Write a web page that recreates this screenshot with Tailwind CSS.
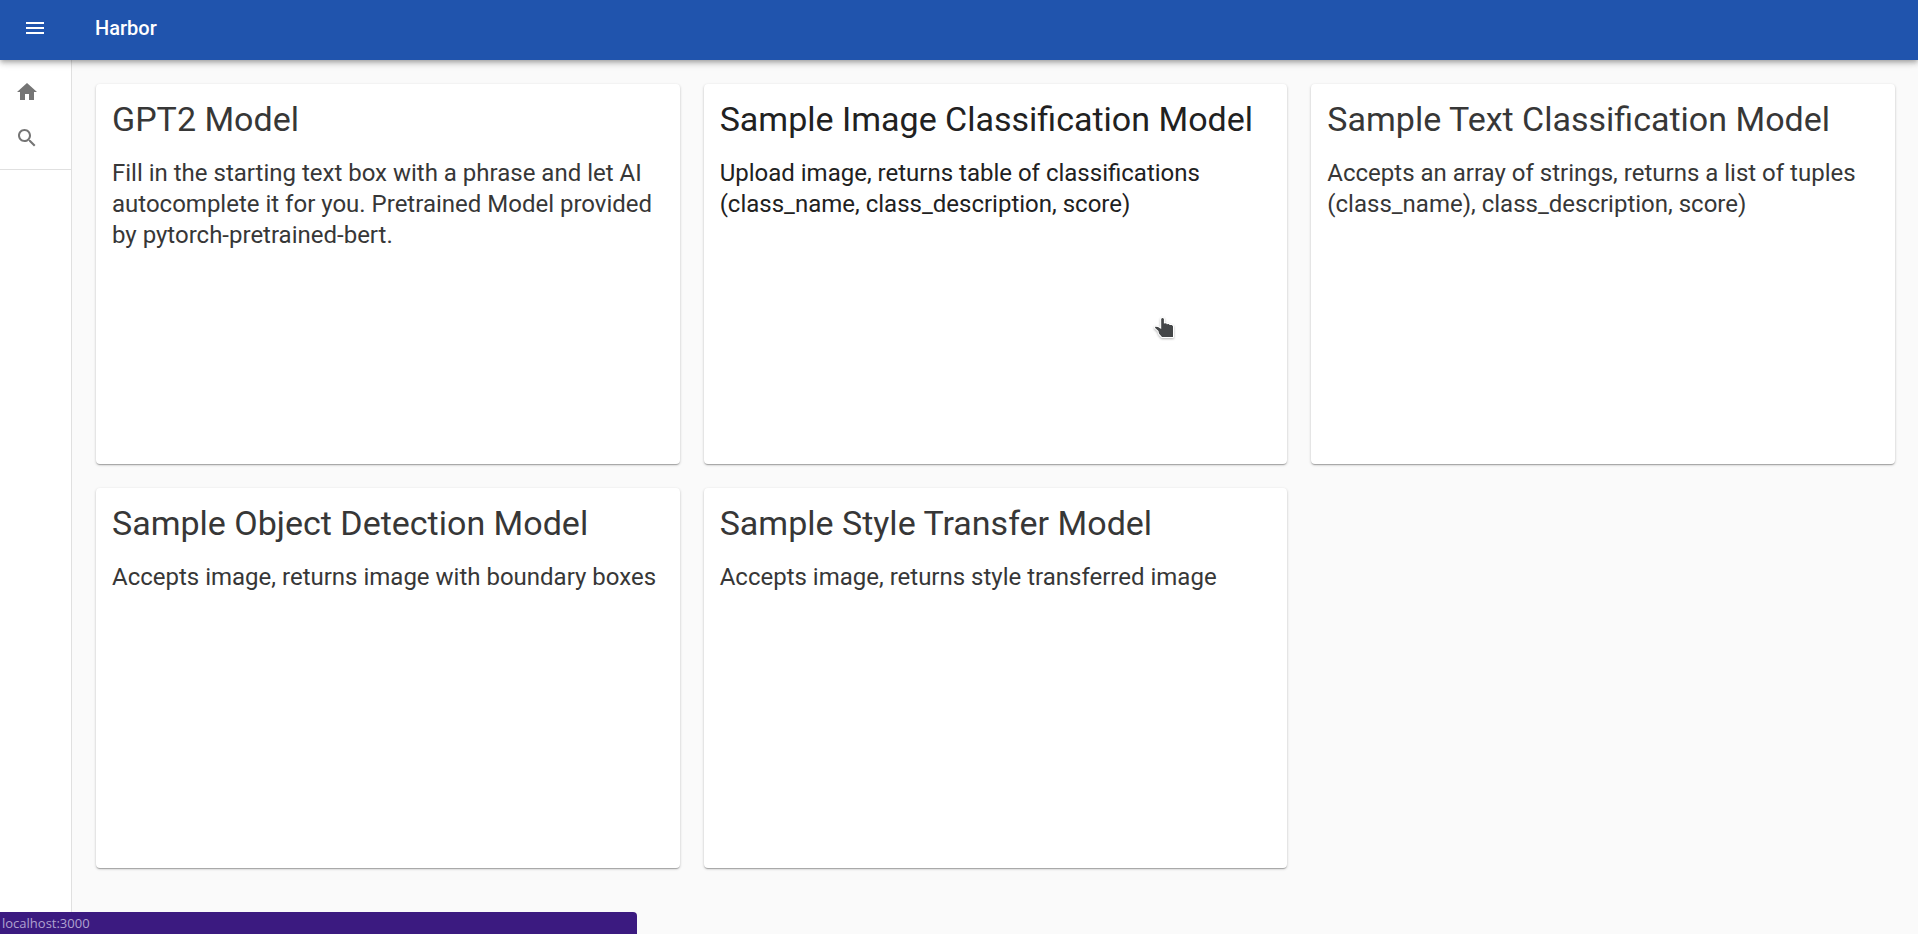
<!DOCTYPE html>
<html lang="en">
<head>
<meta charset="utf-8">
<meta name="viewport" content="width=device-width, initial-scale=1">
<title>Harbor</title>
<script src="https://cdn.jsdelivr.net/npm/@tailwindcss/browser@4"></script>
</head>
<body class="flex min-h-screen flex-col bg-[#fafafa] font-[Roboto,sans-serif] text-[#373737]">
  <header class="relative z-10 flex h-[60px] items-center bg-[#2054ad] pb-1 text-white shadow-[0_2px_4px_-1px_rgba(0,0,0,0.2),0_4px_5px_0_rgba(0,0,0,0.14),0_1px_10px_0_rgba(0,0,0,0.12)]">
    <button type="button" aria-label="Open menu" class="ml-[23px] mr-12 size-6">
      <svg class="size-6" viewBox="0 0 24 24" fill="currentColor"><path d="M3 18h18v-2H3v2zm0-5h18v-2H3v2zm0-7v2h18V6H3z"/></svg>
    </button>
    <h1 class="text-xl font-medium">Harbor</h1>
  </header>

  <div class="flex flex-1">
    <aside class="w-[72px] shrink-0 border-r border-[#e0e0e0] bg-white pt-px text-[#757575]">
      <nav class="flex flex-col border-b border-[#e0e0e0] py-2">
        <a href="#home" aria-label="Home" class="py-[11px] pl-[15px]">
          <svg class="size-6" viewBox="0 0 24 24" fill="currentColor"><path d="M10 20v-6h4v6h5v-8h3L12 3 2 12h3v8z"/></svg>
        </a>
        <a href="#search" aria-label="Search" class="py-[11px] pl-[15px]">
          <svg class="size-6" viewBox="0 0 24 24" fill="currentColor"><path d="M15.5 14h-.79l-.28-.27C15.41 12.59 16 11.11 16 9.5 16 5.91 13.09 3 9.5 3S3 5.91 3 9.5 5.91 16 9.5 16c1.61 0 3.09-.59 4.23-1.57l.27.28v.79l5 4.99L20.49 19l-4.99-5zm-6 0C7.01 14 5 11.99 5 9.5S7.01 5 9.5 5 14 7.01 14 9.5 11.99 14 9.5 14z"/></svg>
        </a>
      </nav>
    </aside>

    <main class="grid flex-1 auto-rows-[380px] grid-cols-3 gap-6 py-6 pl-6 pr-[23px]">
      <a href="#gpt2" class="rounded bg-white p-4 shadow-[0_1px_3px_0_rgba(0,0,0,0.2),0_1px_1px_0_rgba(0,0,0,0.14),0_2px_1px_-1px_rgba(0,0,0,0.12)]">
        <h2 class="mb-5 text-[34px] leading-[38px]">GPT2 Model</h2>
        <p class="text-2xl leading-[31px]">Fill in the starting text box with a phrase and let AI autocomplete it for you. Pretrained Model provided by pytorch-pretrained-bert.</p>
      </a>
      <a href="#image-classification" class="relative rounded bg-white p-4 text-[#212121] shadow-[0_1px_3px_0_rgba(0,0,0,0.2),0_1px_1px_0_rgba(0,0,0,0.14),0_2px_1px_-1px_rgba(0,0,0,0.12)]">
        <h2 class="mb-5 text-[34px] leading-[38px]">Sample Image Classification Model</h2>
        <p class="text-2xl leading-[31px]">Upload image, returns table of classifications (class_name, class_description, score)</p>
        <!-- hand pointer -->
        <svg class="absolute left-[450px] top-[232px] size-6 drop-shadow-[0_1px_1px_rgba(0,0,0,0.3)]" viewBox="0 0 24 24"><path d="M7.2 3q1.3-2 2.7 0v4.500l2.300-.2.5.9 2.200-.1.6.9 2.300 0 1.200 1.200V21H8L5 17.500 4.500 15 1 11.800 1.300 10.800 4 10.900 7.200 13z" fill="#444648" stroke="#fff" stroke-width="2" paint-order="stroke" stroke-linejoin="round"/></svg>
      </a>
      <a href="#text-classification" class="rounded bg-white p-4 shadow-[0_1px_3px_0_rgba(0,0,0,0.2),0_1px_1px_0_rgba(0,0,0,0.14),0_2px_1px_-1px_rgba(0,0,0,0.12)]">
        <h2 class="mb-5 text-[34px] leading-[38px]">Sample Text Classification Model</h2>
        <p class="text-2xl leading-[31px]">Accepts an array of strings, returns a list of tuples (class_name), class_description, score)</p>
      </a>
      <a href="#object-detection" class="rounded bg-white p-4 shadow-[0_1px_3px_0_rgba(0,0,0,0.2),0_1px_1px_0_rgba(0,0,0,0.14),0_2px_1px_-1px_rgba(0,0,0,0.12)]">
        <h2 class="mb-5 text-[34px] leading-[38px]">Sample Object Detection Model</h2>
        <p class="text-2xl leading-[31px]">Accepts image, returns image with boundary boxes</p>
      </a>
      <a href="#style-transfer" class="rounded bg-white p-4 shadow-[0_1px_3px_0_rgba(0,0,0,0.2),0_1px_1px_0_rgba(0,0,0,0.14),0_2px_1px_-1px_rgba(0,0,0,0.12)]">
        <h2 class="mb-5 text-[34px] leading-[38px]">Sample Style Transfer Model</h2>
        <p class="text-2xl leading-[31px]">Accepts image, returns style transferred image</p>
      </a>
    </main>
  </div>

  <div role="status" class="fixed bottom-0 left-0 z-20 flex h-[22px] w-1/3 max-w-[637px] items-center rounded-tr bg-[#3b1a80] pl-0.5 pt-px font-['Open_Sans',sans-serif] text-[13px] text-[#b0a2d0]">localhost:3000</div>
</body>
</html>
